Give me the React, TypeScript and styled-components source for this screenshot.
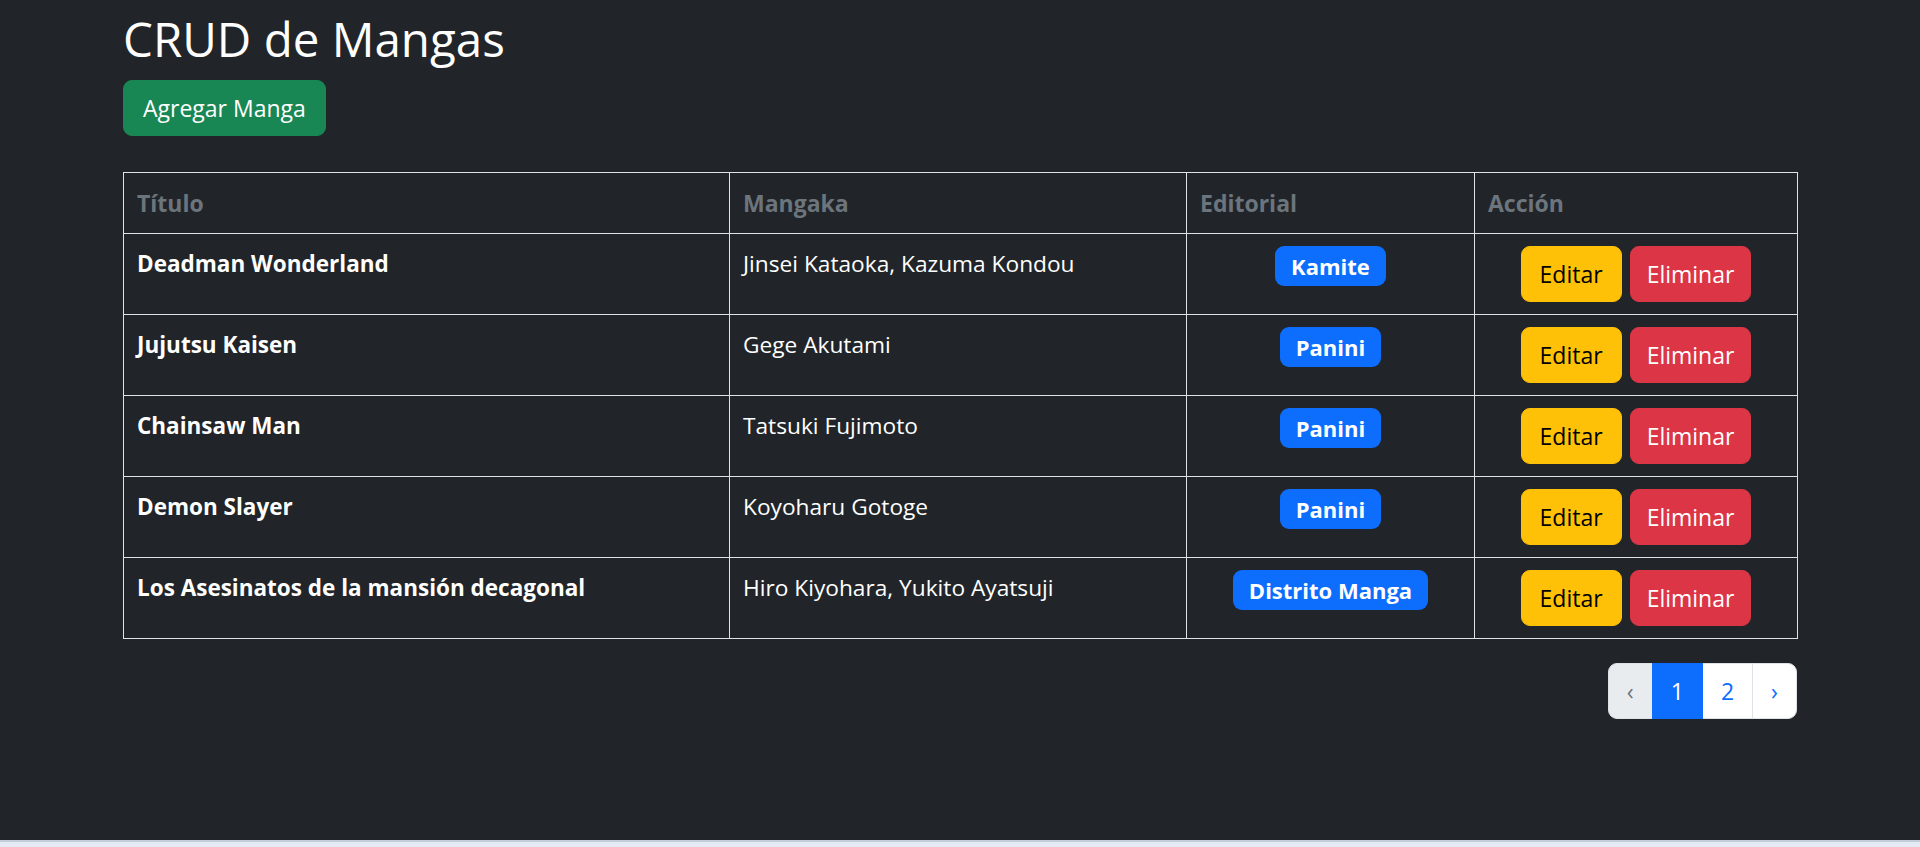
import styled, { createGlobalStyle } from 'styled-components';

const GlobalStyle = createGlobalStyle`
  html, body {
    margin: 0;
    padding: 0;
    background: #e4ebf4;
  }
  * {
    box-sizing: border-box;
  }
`;

const FONT = `"Open Sans", "Noto Sans", "Liberation Sans", sans-serif`;

interface Manga {
  id: number;
  title: string;
  mangaka: string;
  editorial: string;
}

const MANGAS: Manga[] = [
  { id: 1, title: 'Deadman Wonderland', mangaka: 'Jinsei Kataoka, Kazuma Kondou', editorial: 'Kamite' },
  { id: 2, title: 'Jujutsu Kaisen', mangaka: 'Gege Akutami', editorial: 'Panini' },
  { id: 3, title: 'Chainsaw Man', mangaka: 'Tatsuki Fujimoto', editorial: 'Panini' },
  { id: 4, title: 'Demon Slayer', mangaka: 'Koyoharu Gotoge', editorial: 'Panini' },
  { id: 5, title: 'Los Asesinatos de la mansión decagonal', mangaka: 'Hiro Kiyohara, Yukito Ayatsuji', editorial: 'Distrito Manga' },
];

const Page = styled.div`
  background: #212529;
  min-height: 842px;
  padding-top: 10px;
  border-bottom: 2px solid #c3ccd8;
  font-family: ${FONT};
  color: #fff;
`;

const Container = styled.div`
  width: 1674px;
  margin: 0 auto;
`;

const Header = styled.div`
  display: flex;
  flex-direction: column;
  align-items: flex-start;
  margin-bottom: 36px;
`;

const Title = styled.h2`
  margin: 0 0 12px;
  font-size: 47.5px;
  font-weight: 500;
  line-height: 58px;
  color: #fff;
`;

const Button = styled.button<{ $variant: 'success' | 'warning' | 'danger' }>`
  font-family: ${FONT};
  font-size: 23px;
  line-height: 36px;
  padding: 9px 18px;
  border-radius: 9px;
  cursor: pointer;
  ${({ $variant }) =>
    $variant === 'success'
      ? `background: #198754; border: 1px solid #198754; color: #fff; padding: 9px 19px;`
      : $variant === 'warning'
      ? `background: #ffc107; border: 1px solid #ffc107; color: #000;`
      : `background: #dc3545; border: 1px solid #dc3545; color: #fff; padding: 9px 16px;`}
`;

const Table = styled.table`
  width: 100%;
  border-collapse: collapse;
  table-layout: fixed;
  border: 1px solid #dee2e6;
  margin-bottom: 24px;
`;

const Th = styled.th<{ $width: number }>`
  width: ${({ $width }) => $width}px;
  text-align: left;
  padding: 12px 13px;
  border: 1px solid #dee2e6;
  font-size: 23px;
  line-height: 36px;
  font-weight: 700;
  color: #6c757d;
`;

const Td = styled.td<{ $bold?: boolean; $center?: boolean }>`
  padding: 12px 13px;
  border: 1px solid #dee2e6;
  vertical-align: top;
  font-size: ${({ $bold }) => ($bold ? 22.5 : 22.7)}px;
  line-height: 36px;
  font-weight: ${({ $bold }) => ($bold ? 700 : 400)};
  text-align: ${({ $center }) => ($center ? 'center' : 'left')};
  color: #fff;
  height: 81px;
`;

const Badge = styled.span`
  display: inline-block;
  vertical-align: top;
  background: #0d6efd;
  color: #fff;
  font-size: 22px;
  font-weight: 700;
  line-height: 24px;
  padding: 8px 16px;
  border-radius: 9px;
`;

const Actions = styled.div`
  display: flex;
  justify-content: center;
  gap: 8px;
`;

const Pagination = styled.nav`
  display: flex;
  justify-content: flex-end;
`;

const PageItem = styled.span<{ $state: 'disabled' | 'active' | 'normal'; $first?: boolean; $last?: boolean }>`
  display: block;
  padding: 9px 18px;
  font-size: 23px;
  line-height: 36px;
  border: 1px solid #dee2e6;
  margin-left: ${({ $first }) => ($first ? 0 : -1)}px;
  border-radius: ${({ $first, $last }) => ($first ? '9px 0 0 9px' : $last ? '0 9px 9px 0' : '0')};
  ${({ $state }) =>
    $state === 'disabled'
      ? `background: #e9ecef; color: #6c757d;`
      : $state === 'active'
      ? `background: #0d6efd; border-color: #0d6efd; color: #fff; position: relative;`
      : `background: #fff; color: #0d6efd;`}
`;

export default function App() {
  return (
    <>
      <GlobalStyle />
      <Page>
        <Container>
          <Header>
            <Title>CRUD de Mangas</Title>
            <Button $variant="success">Agregar Manga</Button>
          </Header>
          <Table>
            <thead>
              <tr>
                <Th $width={606}>Título</Th>
                <Th $width={457}>Mangaka</Th>
                <Th $width={288}>Editorial</Th>
                <Th $width={323}>Acción</Th>
              </tr>
            </thead>
            <tbody>
              {MANGAS.map((m) => (
                <tr key={m.id}>
                  <Td $bold>{m.title}</Td>
                  <Td>{m.mangaka}</Td>
                  <Td $center>
                    <Badge>{m.editorial}</Badge>
                  </Td>
                  <Td>
                    <Actions>
                      <Button $variant="warning">Editar</Button>
                      <Button $variant="danger">Eliminar</Button>
                    </Actions>
                  </Td>
                </tr>
              ))}
            </tbody>
          </Table>
          <Pagination>
            <PageItem $state="disabled" $first>‹</PageItem>
            <PageItem $state="active">1</PageItem>
            <PageItem $state="normal">2</PageItem>
            <PageItem $state="normal" $last>›</PageItem>
          </Pagination>
        </Container>
      </Page>
    </>
  );
}
